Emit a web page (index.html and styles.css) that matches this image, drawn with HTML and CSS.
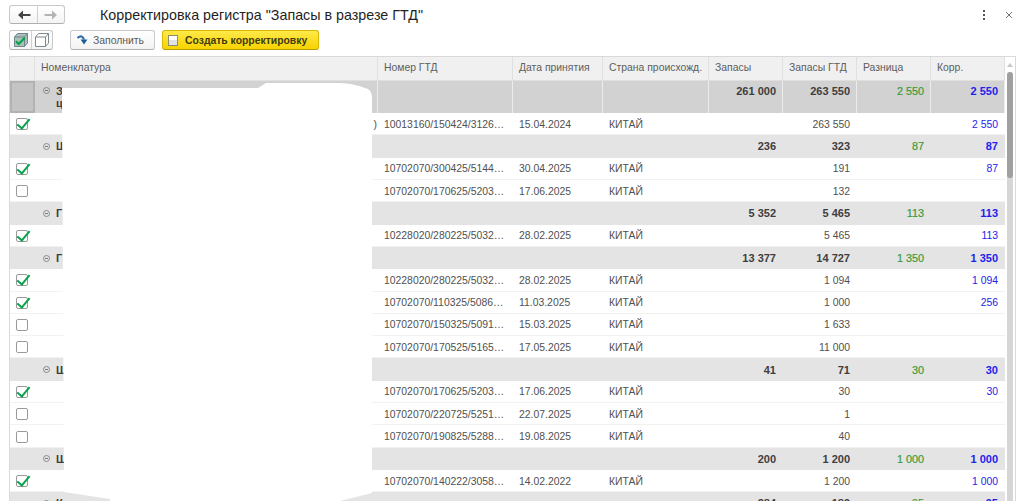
FILE: index.html
```html
<!DOCTYPE html>
<html lang="ru">
<head>
<meta charset="utf-8">
<title>Корректировка регистра</title>
<link rel="stylesheet" href="styles.css">
</head>
<body>
<div class="page">
  <header class="titlebar">
    <div class="btn-group nav">
      <button class="seg"><svg width="14" height="10" viewBox="0 0 14 10"><path d="M5 4h8.500v2H5z" fill="#444"/><path d="M6 0.500v9L1 5z" fill="#444"/></svg></button>
      <button class="seg"><svg width="14" height="10" viewBox="0 0 14 10"><path d="M0.500 4H9v2H0.500z" fill="#b4b4b4"/><path d="M8 0.500v9L13 5z" fill="#b4b4b4"/></svg></button>
    </div>
    <h1 class="title">Корректировка регистра "Запасы в разрезе ГТД"</h1>
    <div class="win-actions">
      <svg width="4" height="10" viewBox="0 0 4 10"><path d="M1 0h2v2H1zM1 4h2v2H1zM1 8h2v2H1z" fill="#555"/></svg>
      <svg width="8" height="8" viewBox="0 0 8 8"><path d="M1 1l6 6M7 1 1 7" stroke="#777" fill="none"/></svg>
    </div>
  </header>
  <div class="toolbar">
    <div class="btn-group view">
      <button class="seg"><svg width="14" height="14" viewBox="0 0 14 14"><path d="M3.500.500H13.500V10L10.500 13.500H.500V4z" fill="#a9c0bb" stroke="#70858c"/><path d="M.500 4H10.500V13.500M10.500 4 13.500.500" fill="none" stroke="#70858c"/><path d="M2 8.200 4.700 11 10.800 4.800" fill="none" stroke="#07a24a" stroke-width="2.200"/></svg></button>
      <button class="seg"><svg width="14" height="14" viewBox="0 0 14 14"><path d="M3.500.500H13.500V10L10.500 13.500H.500V4z" fill="#fff" stroke="#7d8a90"/><path d="M.500 4H10.500V13.500M10.500 4 13.500.500" fill="none" stroke="#7d8a90"/></svg></button>
    </div>
    <button class="btn fill"><svg width="11" height="10" viewBox="0 0 11 10"><path d="M.500 3C3.500 .500 6 1 7 4.500" fill="none" stroke="#2b6ea8" stroke-width="2.200"/><path d="M3.500 4.500h7L7 9.500z" fill="#1f5f97"/></svg>Заполнить</button>
    <button class="btn primary"><span class="doc-icon"></span>Создать корректировку</button>
  </div>
  <section class="grid">
    <div class="cols">
      <div class="row head">
        <div class="c"></div><div class="c">Номенклатура</div><div class="c">Номер ГТД</div><div class="c">Дата принятия</div><div class="c">Страна происхожд.</div><div class="c">Запасы</div><div class="c">Запасы ГТД</div><div class="c">Разница</div><div class="c">Корр.</div>
      </div>
      <div class="row group tall">
        <div class="c sel"></div><div class="c name"><i class="minus"></i><span>З<br>ц</span></div><div class="c"></div><div class="c"></div><div class="c"></div><div class="c num">261 000</div><div class="c num">263 550</div><div class="c num green">2 550</div><div class="c num blue">2 550</div>
      </div>
      <div class="row data"><div class="c"><i class="check on"></i></div><div class="c paren">)</div><div class="c">10013160/150424/3126…</div><div class="c">15.04.2024</div><div class="c">КИТАЙ</div><div class="c num"></div><div class="c num">263 550</div><div class="c num"></div><div class="c num blue">2 550</div></div>
      <div class="row group"><div class="c"></div><div class="c name"><i class="minus"></i><span>Ш</span></div><div class="c"></div><div class="c"></div><div class="c"></div><div class="c num">236</div><div class="c num">323</div><div class="c num green">87</div><div class="c num blue">87</div></div>
      <div class="row data"><div class="c"><i class="check on"></i></div><div class="c"></div><div class="c">10702070/300425/5144…</div><div class="c">30.04.2025</div><div class="c">КИТАЙ</div><div class="c num"></div><div class="c num">191</div><div class="c num"></div><div class="c num blue">87</div></div>
      <div class="row data"><div class="c"><i class="check"></i></div><div class="c"></div><div class="c">10702070/170625/5203…</div><div class="c">17.06.2025</div><div class="c">КИТАЙ</div><div class="c num"></div><div class="c num">132</div><div class="c num"></div><div class="c num blue"></div></div>
      <div class="row group"><div class="c"></div><div class="c name"><i class="minus"></i><span>Г</span></div><div class="c"></div><div class="c"></div><div class="c"></div><div class="c num">5 352</div><div class="c num">5 465</div><div class="c num green">113</div><div class="c num blue">113</div></div>
      <div class="row data"><div class="c"><i class="check on"></i></div><div class="c"></div><div class="c">10228020/280225/5032…</div><div class="c">28.02.2025</div><div class="c">КИТАЙ</div><div class="c num"></div><div class="c num">5 465</div><div class="c num"></div><div class="c num blue">113</div></div>
      <div class="row group"><div class="c"></div><div class="c name"><i class="minus"></i><span>Г</span></div><div class="c"></div><div class="c"></div><div class="c"></div><div class="c num">13 377</div><div class="c num">14 727</div><div class="c num green">1 350</div><div class="c num blue">1 350</div></div>
      <div class="row data"><div class="c"><i class="check on"></i></div><div class="c"></div><div class="c">10228020/280225/5032…</div><div class="c">28.02.2025</div><div class="c">КИТАЙ</div><div class="c num"></div><div class="c num">1 094</div><div class="c num"></div><div class="c num blue">1 094</div></div>
      <div class="row data"><div class="c"><i class="check on"></i></div><div class="c"></div><div class="c">10702070/110325/5086…</div><div class="c">11.03.2025</div><div class="c">КИТАЙ</div><div class="c num"></div><div class="c num">1 000</div><div class="c num"></div><div class="c num blue">256</div></div>
      <div class="row data"><div class="c"><i class="check"></i></div><div class="c"></div><div class="c">10702070/150325/5091…</div><div class="c">15.03.2025</div><div class="c">КИТАЙ</div><div class="c num"></div><div class="c num">1 633</div><div class="c num"></div><div class="c num blue"></div></div>
      <div class="row data"><div class="c"><i class="check"></i></div><div class="c"></div><div class="c">10702070/170525/5165…</div><div class="c">17.05.2025</div><div class="c">КИТАЙ</div><div class="c num"></div><div class="c num">11 000</div><div class="c num"></div><div class="c num blue"></div></div>
      <div class="row group"><div class="c"></div><div class="c name"><i class="minus"></i><span>Ш</span></div><div class="c"></div><div class="c"></div><div class="c"></div><div class="c num">41</div><div class="c num">71</div><div class="c num green">30</div><div class="c num blue">30</div></div>
      <div class="row data"><div class="c"><i class="check on"></i></div><div class="c"></div><div class="c">10702070/170625/5203…</div><div class="c">17.06.2025</div><div class="c">КИТАЙ</div><div class="c num"></div><div class="c num">30</div><div class="c num"></div><div class="c num blue">30</div></div>
      <div class="row data"><div class="c"><i class="check"></i></div><div class="c"></div><div class="c">10702070/220725/5251…</div><div class="c">22.07.2025</div><div class="c">КИТАЙ</div><div class="c num"></div><div class="c num">1</div><div class="c num"></div><div class="c num blue"></div></div>
      <div class="row data"><div class="c"><i class="check"></i></div><div class="c"></div><div class="c">10702070/190825/5288…</div><div class="c">19.08.2025</div><div class="c">КИТАЙ</div><div class="c num"></div><div class="c num">40</div><div class="c num"></div><div class="c num blue"></div></div>
      <div class="row group"><div class="c"></div><div class="c name"><i class="minus"></i><span>Ш</span></div><div class="c"></div><div class="c"></div><div class="c"></div><div class="c num">200</div><div class="c num">1 200</div><div class="c num green">1 000</div><div class="c num blue">1 000</div></div>
      <div class="row data"><div class="c"><i class="check on"></i></div><div class="c"></div><div class="c">10702070/140222/3058…</div><div class="c">14.02.2022</div><div class="c">КИТАЙ</div><div class="c num"></div><div class="c num">1 200</div><div class="c num"></div><div class="c num blue">1 000</div></div>
      <div class="row group"><div class="c"></div><div class="c name"><i class="minus"></i><span>К</span></div><div class="c"></div><div class="c"></div><div class="c"></div><div class="c num">284</div><div class="c num">189</div><div class="c num green">95</div><div class="c num blue">95</div></div>
    </div>
    <div class="scrollbar"><span class="arrow"></span><span class="track"><span class="thumb"></span></span></div>
  </section>
  <svg class="redact" width="330" height="430" viewBox="0 0 330 430"><path d="M2 6H198L206 1H278C290 1 300 4 308 7C311 9 312 12 312 16V411L280 419H50V417L4 410Z" fill="#fff"/></svg>
</div>
</body>
</html>
```
FILE: styles.css
```css
* { box-sizing: border-box; }
html, body { margin: 0; height: 100%; background: #fff; }
body { overflow: hidden; font-family: "Liberation Sans", Arial, sans-serif; font-size: 10.4px; color: #505050; }
.page { position: relative; width: 1024px; height: 501px; overflow: hidden; padding: 5px 0 0 9px; }
.titlebar { display: flex; align-items: center; height: 19px; }
.btn-group { display: flex; border: 1px solid #c9c9c9; border-bottom-color: #b0b0b0; border-radius: 3px; background: linear-gradient(#fff, #f4f4f4); }
.seg { display: flex; align-items: center; justify-content: center; padding: 0; border: 0; background: none; }
.seg + .seg { border-left: 1px solid #d0d0d0; }
.nav .seg { width: 27px; height: 17px; }
.title { margin: 0 0 0 35px; font-size: 14.3px; font-weight: 400; color: #1f1f1f; white-space: nowrap; }
.win-actions { display: flex; align-items: center; gap: 19px; margin-left: auto; margin-right: 11px; }
.toolbar { display: flex; align-items: center; height: 20px; margin-top: 6px; }
.view .seg { width: 21px; height: 18px; }
.btn { display: flex; align-items: center; height: 20px; padding: 0; border: 1px solid #c9c9c9; border-bottom-color: #b0b0b0; border-radius: 3px; background: linear-gradient(#fff, #f3f3f3); font: 10.4px "Liberation Sans", Arial, sans-serif; color: #5a5a5a; }
.fill { width: 85px; margin-left: 17px; padding-left: 6px; gap: 5px; }
.primary { width: 157px; margin-left: 7px; padding-left: 5px; gap: 7px; border-color: #d8b800; border-bottom-color: #b89c00; background: linear-gradient(#ffe94a, #f7d300); color: #3f3a10; font-weight: 700; }
.doc-icon { width: 10px; height: 11px; border: 1px solid #8d8d70; background: linear-gradient(#fff 50%, #dfe3e3 50%); }
.grid { display: flex; width: 1007px; height: 450px; margin-top: 6px; border: 1px solid #d9d9d9; border-bottom: 0; overflow: hidden; }
.cols { width: 995px; flex: none; }
.row { display: grid; grid-template-columns: 25px 343px 135px 90px 106px 74px 74px 74px 74px; height: 22.32px; }
.c { display: flex; align-items: center; padding: 0 6px; white-space: nowrap; overflow: hidden; min-width: 0; border-right: 1px solid transparent; }
.head { height: 24px; background: #f0f0f0; color: #5e5e5e; }
.head .c { padding-bottom: 2px; border-right-color: #e0e0e0; border-bottom: 1px solid #e0e0e0; }
.group { background: #e4e4e4; color: #3e3e3e; font-size: 11px; font-weight: 700; }
.tall { height: 32px; background: #d2d2d2; }
.tall .c { align-items: flex-start; padding-top: 4px; border-right-color: #ececec; }
.tall .name { line-height: 12px; }
.tall .sel { border: 2px solid #b2b2b2; background: #c4c4c4; }
.data { border-bottom: 1px solid #f2f2f2; }
.data .c { padding-top: 1px; }
.num { justify-content: flex-end; }
.green { color: #3c9a35; }
.group .green { font-size: 10.8px; font-weight: 400; -webkit-text-stroke: 0.2px #3c9a35; }
.blue { color: #2222ee; }
.name { padding-left: 8px; gap: 4px; }
.minus { flex: none; position: relative; width: 7px; height: 7px; border: 1px solid #8a8a8a; border-radius: 50%; }
.minus::after { content: ""; position: absolute; left: 1px; top: 2px; width: 3px; height: 1px; background: #777; }
.tall .minus { margin-top: 2px; }
.name span { margin-left: 2px; }
.paren { justify-content: flex-end; padding-right: 0; }
.check { position: relative; flex: none; display: block; width: 12px; height: 12px; border: 1px solid #9a9a9a; border-radius: 2px; background: #fff; }
.on::after { content: ""; position: absolute; left: 2.500px; top: -3px; width: 5px; height: 11px; border: solid #07a24a; border-width: 0 2.500px 2.500px 0; transform: rotate(40deg); }
.scrollbar { flex: 1; display: flex; flex-direction: column; align-items: flex-start; padding-left: 2px; }
.arrow { width: 0; height: 0; margin: 6px 0 5px 0; border: 3px solid transparent; border-top: 0; border-bottom: 4px solid #c8c8c8; }
.track { flex: 1; width: 6px; background: #d6d6d6; border-radius: 3px; }
.thumb { display: block; width: 6px; height: 106px; background: #a0a0a0; border-radius: 3px; }
.redact { position: absolute; left: 60px; top: 82px; }
```
